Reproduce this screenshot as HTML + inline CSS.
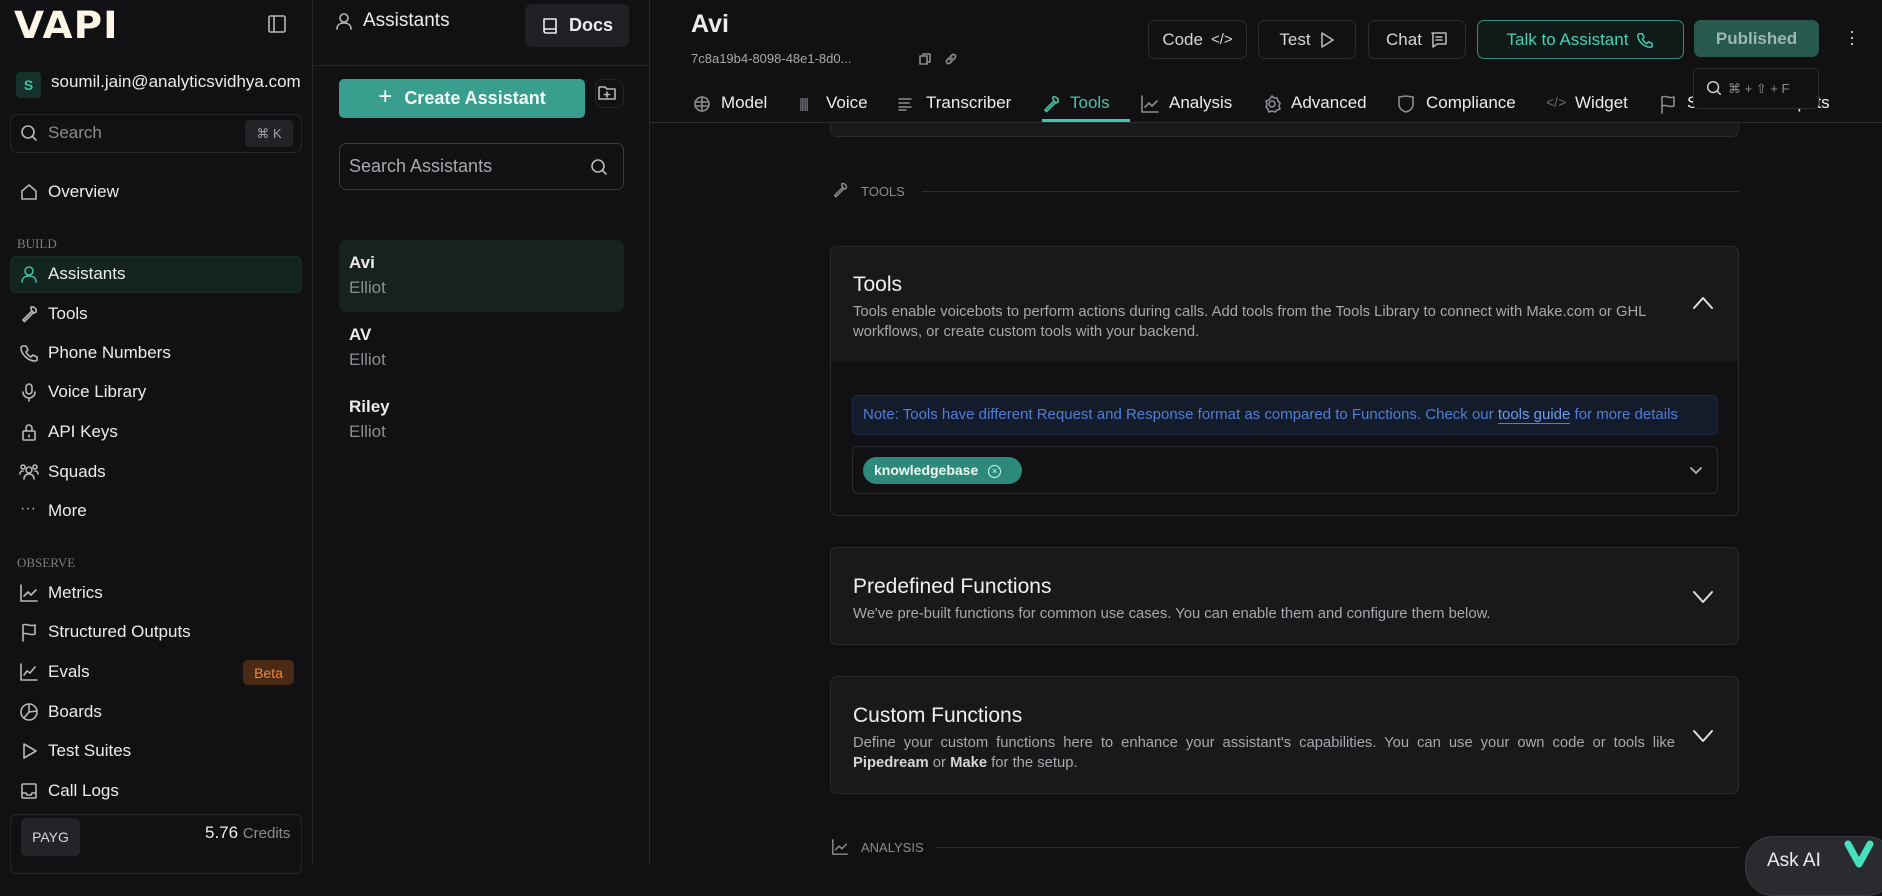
<!DOCTYPE html>
<html><head><meta charset="utf-8"><style>
*{box-sizing:border-box;margin:0;padding:0}
body{width:1882px;height:865px;overflow:hidden;background:#111113;font-family:"Liberation Sans",sans-serif;color:#ececee;position:relative}
.abs{position:absolute}
svg{display:block}
.ic{position:absolute;fill:none;stroke:#b8b8bc;stroke-width:1.6;stroke-linecap:round;stroke-linejoin:round}
.nav{position:absolute;left:48px;font-size:17px;color:#ececee;transform:translateY(-50%)}
.sec{position:absolute;left:17px;font-size:13px;color:#7c7c82;font-family:"Liberation Serif",serif}
.btn{position:absolute;top:20px;height:39px;border:1px solid #2c2d30;border-radius:7px;display:flex;align-items:center;justify-content:center;gap:8px;font-size:17px;color:#d6d6da}
.tab{position:absolute;top:103px;transform:translateY(-50%);font-size:17px;color:#ececee}
.card{position:absolute;left:830px;width:909px;border:1px solid #2a2b2e;border-radius:7px;background:#18191b}
.ct{position:absolute;left:22px;font-size:21px;color:#f0f0f2}
.cd{position:absolute;left:22px;font-size:14.8px;color:#a8a8ae;line-height:20px}
</style></head><body>

<!-- left sidebar -->
<div class="abs" style="left:0;top:0;width:313px;height:865px;background:#111113;border-right:1px solid #26272a"></div>
<div class="abs" style="left:14px;top:4px;font-size:37px;font-weight:900;color:#fdf6e6;letter-spacing:1px;font-family:'DejaVu Sans',sans-serif;transform:scaleX(1.05);transform-origin:left">VAPI</div>
<svg class="ic" style="left:267px;top:14px" width="20" height="20" viewBox="0 0 20 20"><rect x="2" y="2" width="16" height="16" rx="1.5"/><line x1="7" y1="2" x2="7" y2="18"/></svg>
<div class="abs" style="left:16px;top:72px;width:25px;height:26px;background:#16302b;border-radius:4px;color:#3fc1a5;font-size:14px;font-weight:bold;display:flex;align-items:center;justify-content:center">S</div>
<div class="abs" style="left:51px;top:72px;font-size:17px;width:252px;overflow:hidden;white-space:nowrap">soumil.jain@analyticsvidhya.com</div>
<div class="abs" style="left:10px;top:114px;width:292px;height:39px;border:1px solid #26272a;border-radius:7px"></div>
<svg class="ic" style="left:19px;top:123px" width="20" height="20" viewBox="0 0 20 20"><circle cx="9" cy="9" r="6"/><line x1="13.5" y1="13.5" x2="17" y2="17"/></svg>
<div class="abs" style="left:48px;top:123px;font-size:17px;color:#8c8c92">Search</div>
<div class="abs" style="left:245px;top:120px;width:48px;height:27px;background:#222326;border-radius:4px;font-size:13px;color:#a0a0a6;display:flex;align-items:center;justify-content:center">⌘ K</div>

<svg class="ic" style="left:19px;top:182px" width="20" height="20" viewBox="0 0 20 20"><path d="M3 17V9l7-6 7 6v8z"/></svg>
<div class="nav" style="top:192px">Overview</div>
<div class="sec" style="top:236px">BUILD</div>
<div class="abs" style="left:10px;top:256px;width:292px;height:37px;background:#132421;border:1px solid #1a2c28;border-radius:6px"></div>
<svg class="ic" style="left:19px;top:264px;stroke:#3fc1a5" width="20" height="20" viewBox="0 0 20 20"><circle cx="10" cy="7" r="4"/><path d="M3 18c0-4 3-6 7-6s7 2 7 6"/></svg>
<div class="nav" style="top:274px">Assistants</div>
<svg class="ic" style="left:19px;top:304px" width="20" height="20" viewBox="0 0 20 20"><path d="M12 3a4 4 0 0 1 5 5l-2 1-2-2-1-2zM12 8l-8 8 1.5 1.5 8-8"/></svg>
<div class="nav" style="top:314px">Tools</div>
<svg class="ic" style="left:19px;top:343px" width="20" height="20" viewBox="0 0 20 20"><path d="M4 3h3l2 4-2 2c1 2 3 4 5 5l2-2 4 2v3c0 1-1 1-2 1C9 18 2 11 2 5c0-1 1-2 2-2z"/></svg>
<div class="nav" style="top:353px">Phone Numbers</div>
<svg class="ic" style="left:19px;top:382px" width="20" height="20" viewBox="0 0 20 20"><rect x="7" y="2" width="6" height="10" rx="3"/><path d="M4 10a6 6 0 0 0 12 0M10 16v3"/></svg>
<div class="nav" style="top:392px">Voice Library</div>
<svg class="ic" style="left:19px;top:422px" width="20" height="20" viewBox="0 0 20 20"><rect x="4" y="9" width="12" height="9" rx="1"/><path d="M7 9V6a3 3 0 0 1 6 0v3M10 13v2"/></svg>
<div class="nav" style="top:432px">API Keys</div>
<svg class="ic" style="left:18px;top:462px" width="22" height="20" viewBox="0 0 22 20"><circle cx="11" cy="8" r="3"/><circle cx="5" cy="5" r="2"/><circle cx="17" cy="5" r="2"/><path d="M6 17c0-3 2-5 5-5s5 2 5 5M2 12c0-2 1-3 3-3M20 12c0-2-1-3-3-3"/></svg>
<div class="nav" style="top:472px">Squads</div>
<div class="abs" style="left:20px;top:500px;font-size:16px;color:#b8b8bc">···</div>
<div class="nav" style="top:511px">More</div>
<div class="sec" style="top:555px">OBSERVE</div>
<svg class="ic" style="left:19px;top:583px" width="20" height="20" viewBox="0 0 20 20"><path d="M2 2v16h16M5 13l4-4 3 3 5-5"/></svg>
<div class="nav" style="top:593px">Metrics</div>
<svg class="ic" style="left:19px;top:622px" width="20" height="20" viewBox="0 0 20 20"><path d="M4 19V3c4-2 7 2 12 0v9c-5 2-8-2-12 0"/></svg>
<div class="nav" style="top:632px">Structured Outputs</div>
<svg class="ic" style="left:19px;top:662px" width="20" height="20" viewBox="0 0 20 20"><path d="M2 2v16h16M5 13l3-4 3 2 5-6"/></svg>
<div class="nav" style="top:672px">Evals</div>
<div class="abs" style="left:243px;top:660px;width:51px;height:25px;background:#4a2a14;border-radius:5px;color:#f08a3c;font-size:14px;display:flex;align-items:center;justify-content:center">Beta</div>
<svg class="ic" style="left:19px;top:702px" width="20" height="20" viewBox="0 0 20 20"><circle cx="10" cy="10" r="8"/><path d="M10 2v8l-5 6M10 10l8-1"/></svg>
<div class="nav" style="top:712px">Boards</div>
<svg class="ic" style="left:19px;top:741px" width="20" height="20" viewBox="0 0 20 20"><path d="M5 3l12 7-12 7z"/></svg>
<div class="nav" style="top:751px">Test Suites</div>
<svg class="ic" style="left:19px;top:781px" width="20" height="20" viewBox="0 0 20 20"><rect x="3" y="3" width="14" height="14" rx="1"/><path d="M3 12h4l1 2h4l1-2h4"/></svg>
<div class="nav" style="top:791px">Call Logs</div>
<div class="abs" style="left:10px;top:814px;width:292px;height:60px;border:1px solid #26272a;border-radius:7px"></div>
<div class="abs" style="left:21px;top:818px;width:59px;height:38px;background:#232427;border-radius:5px;font-size:14px;color:#d6d6da;display:flex;align-items:center;justify-content:center">PAYG</div>
<div class="abs" style="left:205px;top:823px;font-size:17px;color:#ececee">5.76 <span style="font-size:15px;color:#8c8c92">Credits</span></div>

<!-- second panel -->
<div class="abs" style="left:314px;top:0;width:336px;height:865px;border-right:1px solid #26272a"></div>
<div class="abs" style="left:314px;top:65px;width:336px;height:1px;background:#26272a"></div>
<svg class="ic" style="left:334px;top:11px" width="20" height="20" viewBox="0 0 20 20"><circle cx="10" cy="7" r="4"/><path d="M3 18c0-4 3-6 7-6s7 2 7 6"/></svg>
<div class="abs" style="left:363px;top:10px;font-size:19px">Assistants</div>
<div class="abs" style="left:525px;top:4px;width:104px;height:43px;background:#1f2023;border-radius:7px;display:flex;align-items:center;justify-content:center;gap:10px;font-size:18px;font-weight:bold"><svg class="ic" style="position:static;stroke:#ececee" width="18" height="20" viewBox="0 0 18 20"><path d="M3 3h12v14H5a2 2 0 0 1-2-2zM3 15a2 2 0 0 1 2-2h10"/></svg>Docs</div>
<div class="abs" style="left:339px;top:79px;width:246px;height:39px;background:#3a9e8f;border-radius:5px;display:flex;align-items:center;justify-content:center;gap:12px;font-size:18px;font-weight:bold;color:#f4faf8"><span style="font-size:24px;font-weight:normal;margin-top:-3px">+</span>Create Assistant</div>
<div class="abs" style="left:595px;top:79px;width:29px;height:29px;border:1px solid #232427;border-radius:8px"></div>
<svg class="ic" style="left:597px;top:84px" width="20" height="18" viewBox="0 0 20 18"><path d="M2 3h6l2 2h8v10H2zM10 8v5M7.5 10.5h5"/></svg>
<div class="abs" style="left:339px;top:143px;width:285px;height:47px;border:1px solid #3a3b3f;border-radius:7px"></div>
<div class="abs" style="left:349px;top:156px;font-size:18px;color:#a8a8ae">Search Assistants</div>
<svg class="ic" style="left:589px;top:157px" width="20" height="20" viewBox="0 0 20 20"><circle cx="9" cy="9" r="6"/><line x1="13.5" y1="13.5" x2="17" y2="17"/></svg>
<div class="abs" style="left:339px;top:240px;width:285px;height:72px;background:#162220;border-radius:8px"></div>
<div class="abs" style="left:349px;top:253px;font-size:17px;font-weight:bold">Avi</div>
<div class="abs" style="left:349px;top:278px;font-size:17px;color:#8c8c92">Elliot</div>
<div class="abs" style="left:349px;top:325px;font-size:17px;font-weight:bold">AV</div>
<div class="abs" style="left:349px;top:350px;font-size:17px;color:#8c8c92">Elliot</div>
<div class="abs" style="left:349px;top:397px;font-size:17px;font-weight:bold">Riley</div>
<div class="abs" style="left:349px;top:422px;font-size:17px;color:#8c8c92">Elliot</div>

<!-- content -->
<div class="abs" style="left:830px;top:122px;width:909px;height:15px;border:1px solid #2a2b2e;border-top:none;border-radius:0 0 7px 7px;background:#18191b"></div>
<svg class="ic" style="left:831px;top:181px;stroke:#8c8c92" width="18" height="18" viewBox="0 0 20 20"><path d="M12 3a4 4 0 0 1 5 5l-2 1-2-2-1-2zM12 8l-8 8 1.5 1.5 8-8"/></svg>
<div class="abs" style="left:861px;top:184px;font-size:13px;color:#8c8c92">TOOLS</div>
<div class="abs" style="left:922px;top:191px;width:817px;height:1px;background:#2c2d30"></div>

<div class="card" style="top:246px;height:270px;background:#111113;overflow:hidden">
  <div class="abs" style="left:0;top:0;width:100%;height:115px;background:#18191b"></div>
  <div class="ct" style="top:26px">Tools</div>
  <div class="cd" style="top:55px;width:822px">Tools enable voicebots to perform actions during calls. Add tools from the Tools Library to connect with Make.com or GHL workflows, or create custom tools with your backend.</div>
  <svg class="ic" style="left:861px;top:49px;stroke:#e0e0e4;stroke-width:2" width="22" height="14" viewBox="0 0 22 14"><path d="M2 12l9-10 9 10"/></svg>
  <div class="abs" style="left:21px;top:148px;width:866px;height:40px;background:#141b2b;border:1px solid #1f2a44;border-radius:6px;font-size:15px;color:#4f7fd8;padding:10px 10px;white-space:nowrap">Note: Tools have different Request and Response format as compared to Functions. Check our <span style="color:#6b9cf0;border-bottom:1.5px solid #4f7fd8">tools guide</span> for more details</div>
  <div class="abs" style="left:21px;top:199px;width:866px;height:48px;border:1px solid #2a2b2e;border-radius:6px"></div>
  <div class="abs" style="left:32px;top:210px;width:159px;height:27px;background:#2d8a7b;border-radius:14px;font-size:14px;font-weight:bold;color:#f0f8f6;padding:5px 0 0 11px">knowledgebase <span style="display:inline-block;width:13px;height:13px;border:1px solid #cfe;border-radius:50%;font-size:9px;text-align:center;line-height:11px;font-weight:normal;margin-left:6px;vertical-align:1px">×</span></div>
  <svg class="ic" style="left:858px;top:219px" width="14" height="10" viewBox="0 0 14 10"><path d="M2 2l5 5 5-5"/></svg>
</div>

<div class="card" style="top:547px;height:98px">
  <div class="ct" style="top:27px">Predefined Functions</div>
  <div class="cd" style="top:56px">We've pre-built functions for common use cases. You can enable them and configure them below.</div>
  <svg class="ic" style="left:861px;top:42px;stroke:#e0e0e4;stroke-width:2" width="22" height="14" viewBox="0 0 22 14"><path d="M2 2l9 10 9-10"/></svg>
</div>
<div class="card" style="top:676px;height:118px">
  <div class="ct" style="top:27px">Custom Functions</div>
  <div class="cd" style="top:56px;width:822px;text-align:justify;text-align-last:left">Define your custom functions here to enhance your assistant's capabilities. You can use your own code or tools like <b style="color:#d6d6da">Pipedream</b> or <b style="color:#d6d6da">Make</b> for the setup.</div>
  <svg class="ic" style="left:861px;top:52px;stroke:#e0e0e4;stroke-width:2" width="22" height="14" viewBox="0 0 22 14"><path d="M2 2l9 10 9-10"/></svg>
</div>

<svg class="ic" style="left:831px;top:838px;stroke:#8c8c92" width="18" height="18" viewBox="0 0 20 20"><path d="M2 2v16h16M5 13l4-4 3 3 5-5"/></svg>
<div class="abs" style="left:861px;top:840px;font-size:13px;color:#8c8c92">ANALYSIS</div>
<div class="abs" style="left:935px;top:847px;width:804px;height:1px;background:#2c2d30"></div>

<!-- main header -->
<div class="abs" style="left:650px;top:0;width:1232px;height:122px;background:#111113"></div>
<div class="abs" style="left:691px;top:10px;font-size:25px;font-weight:bold">Avi</div>
<div class="abs" style="left:691px;top:51px;font-size:13px;color:#a8a8ae">7c8a19b4-8098-48e1-8d0...</div>
<svg class="ic" style="left:918px;top:52px;stroke:#8c8c92" width="14" height="14" viewBox="0 0 14 14"><rect x="2" y="4" width="7" height="8"/><path d="M5 4V2h7v8h-3"/></svg>
<svg class="ic" style="left:944px;top:52px;stroke:#8c8c92" width="14" height="14" viewBox="0 0 14 14"><path d="M6 8l2-2M5 6l-2 2a2 2 0 0 0 3 3l2-2M9 8l2-2a2 2 0 0 0-3-3L6 5"/></svg>

<div class="btn" style="left:1148px;width:99px">Code <span style="font-size:15px">&lt;/&gt;</span></div>
<div class="btn" style="left:1258px;width:98px">Test <svg class="ic" style="position:static" width="16" height="18" viewBox="0 0 16 18"><path d="M3 2l11 7-11 7z"/></svg></div>
<div class="btn" style="left:1368px;width:98px">Chat <svg class="ic" style="position:static" width="18" height="18" viewBox="0 0 18 18"><path d="M2 2h14v11H7l-4 3V2zM6 6h6M6 9h6"/></svg></div>
<div class="btn" style="left:1477px;width:207px;border-color:#2f8f7c;background:#101a18;color:#46d3b4">Talk to Assistant <svg class="ic" style="position:static;stroke:#46d3b4" width="18" height="18" viewBox="0 0 20 20"><path d="M4 3h3l2 4-2 2c1 2 3 4 5 5l2-2 4 2v3c0 1-1 1-2 1C9 18 2 11 2 5c0-1 1-2 2-2z"/></svg></div>
<div class="btn" style="left:1694px;width:125px;height:37px;background:#27594f;border-color:#27594f;color:#9bb8b1;font-weight:bold">Published</div>
<div class="abs" style="left:1849px;top:28px;font-size:18px;color:#d6d6da;line-height:6px">·<br>·<br>·</div>

<div class="abs" style="left:650px;top:122px;width:1232px;height:1px;background:#2c2d30"></div>
<svg class="ic" style="left:692px;top:94px;stroke:#8c8c92" width="20" height="20" viewBox="0 0 20 20"><circle cx="10" cy="10" r="7"/><path d="M10 3v14M4 8h12M4 12h12"/></svg>
<div class="tab" style="left:721px">Model</div>
<div class="abs" style="left:799px;top:95px;font-size:14px;color:#6c6c72;letter-spacing:-2px">|||||</div>
<div class="tab" style="left:826px">Voice</div>
<svg class="ic" style="left:897px;top:96px;stroke:#8c8c92" width="16" height="16" viewBox="0 0 16 16"><path d="M2 3h12M2 7h10M2 11h12M2 14h7"/></svg>
<div class="tab" style="left:926px">Transcriber</div>
<svg class="ic" style="left:1041px;top:94px;stroke:#46c4a8" width="20" height="20" viewBox="0 0 20 20"><path d="M12 3a4 4 0 0 1 5 5l-2 1-2-2-1-2zM12 8l-8 8 1.5 1.5 8-8"/></svg>
<div class="tab" style="left:1070px;color:#46c4a8">Tools</div>
<div class="abs" style="left:1042px;top:119px;width:88px;height:3px;background:#46c4a8"></div>
<svg class="ic" style="left:1140px;top:94px;stroke:#8c8c92" width="20" height="20" viewBox="0 0 20 20"><path d="M2 2v16h16M5 13l4-4 3 3 5-5"/></svg>
<div class="tab" style="left:1169px">Analysis</div>
<svg class="ic" style="left:1262px;top:94px;stroke:#8c8c92" width="20" height="20" viewBox="0 0 20 20"><circle cx="10" cy="10" r="3"/><path d="M10 2l2 2 3 0 1 3 2 2-1 3 1 3-3 1-2 2-3-1-3 1-1-3-2-2 1-3-1-3 3-1z"/></svg>
<div class="tab" style="left:1291px">Advanced</div>
<svg class="ic" style="left:1397px;top:94px;stroke:#8c8c92" width="18" height="20" viewBox="0 0 18 20"><path d="M2 3l7-1 7 1v7c0 4-3 7-7 8-4-1-7-4-7-8z"/></svg>
<div class="tab" style="left:1426px">Compliance</div>
<div class="abs" style="left:1546px;top:94px;font-size:14px;color:#6c6c72">&lt;/&gt;</div>
<div class="tab" style="left:1575px">Widget</div>
<svg class="ic" style="left:1659px;top:94px;stroke:#8c8c92" width="18" height="20" viewBox="0 0 18 20"><path d="M3 19V3c4-2 7 2 12 0v9c-5 2-8-2-12 0"/></svg>
<div class="tab" style="left:1687px">Structured Outputs</div>
<div class="abs" style="left:1693px;top:68px;width:126px;height:41px;background:#111113;border:1px solid #2c2d30;border-radius:5px"></div>
<svg class="ic" style="left:1705px;top:79px;stroke:#d6d6da" width="18" height="18" viewBox="0 0 20 20"><circle cx="9" cy="9" r="6"/><line x1="13.5" y1="13.5" x2="17" y2="17"/></svg>
<div class="abs" style="left:1728px;top:81px;font-size:13px;color:#8c8c92">⌘ + ⇧ + F</div>

<div class="abs" style="left:1745px;top:836px;width:150px;height:60px;background:#2a2b2e;border-radius:28px;border:1px solid #3a3b3f"></div>
<div class="abs" style="left:1767px;top:850px;font-size:19px;color:#ececee">Ask AI</div>
<svg class="abs" style="left:1844px;top:840px" width="30" height="28" viewBox="0 0 30 28"><path d="M4 4l11 20 11-20" fill="none" stroke="#46e0bd" stroke-width="7" stroke-linecap="round" stroke-linejoin="round"/></svg>
</body></html>
